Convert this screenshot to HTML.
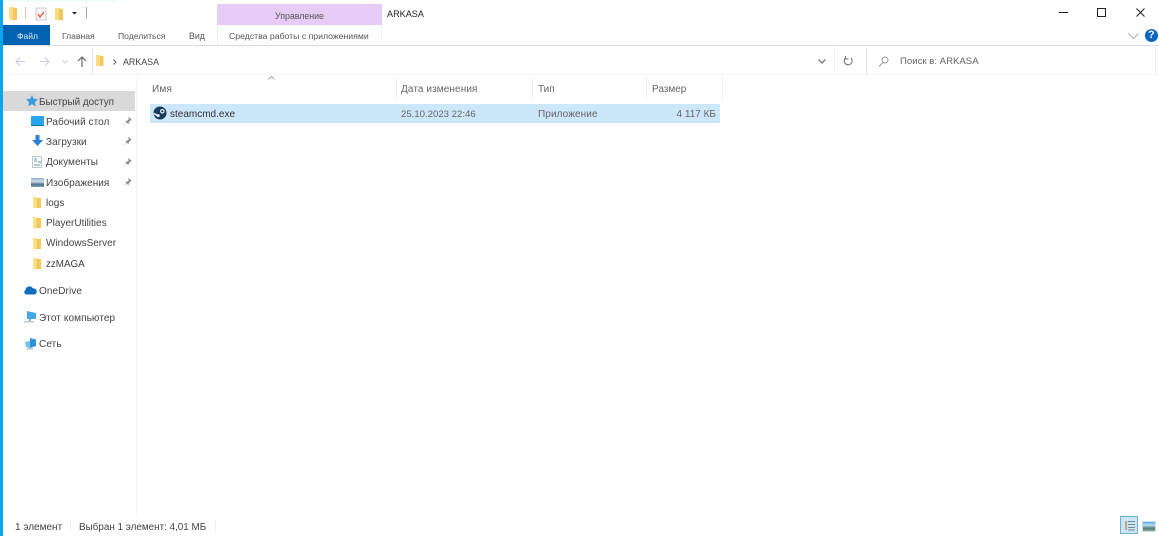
<!DOCTYPE html>
<html><head><meta charset="utf-8"><style>
html,body{margin:0;padding:0;background:#fff;width:1159px;height:536px;overflow:hidden}
body{position:relative;font-family:"Liberation Sans","DejaVu Sans",sans-serif;font-size:10px;color:#333}
#w{position:absolute;left:0;top:0;width:1159px;height:536px;filter:blur(.3px)}
.t{position:absolute;white-space:nowrap;line-height:12px;transform:translateY(1px)}
.b{position:absolute}
svg{position:absolute;overflow:visible}
</style></head><body><div id="w">
<div class="b" style="left:0;top:0;width:3px;height:536px;background:#0ea5ee"></div>
<div class="b" style="left:3px;top:0;width:114px;height:2px;background:#f2fbfc"></div>

<!-- quick access -->
<svg style="left:9px;top:7px" width="12" height="14"><path d="M0 0h4l1 1h3v12H2l-2-1z" fill="#fbdc82"/><path d="M4 1h4v12H4z" fill="#f4c95c"/></svg>
<div class="b" style="left:25px;top:7px;width:1px;height:12px;background:#c8c8c8"></div>
<svg style="left:35px;top:7px" width="12" height="14"><path d="M1 1h10v12H1z" fill="#f6f6f6" stroke="#ccc"/><path d="M3 7l2 3 4-5" fill="none" stroke="#e0573a" stroke-width="1.300"/></svg>
<svg style="left:54px;top:7px" width="11" height="13"><path d="M1 1h5l1 1h2v11H1z" fill="#fadc84"/><path d="M5 2h4v11H5z" fill="#f2c75c"/></svg>
<svg style="left:72px;top:11px" width="6" height="4"><path d="M0 1h5L2.500 3.500z" fill="#222"/></svg>
<div class="b" style="left:86px;top:7px;width:1px;height:12px;background:#aaa"></div>

<!-- contextual tab -->
<div class="b" style="left:217px;top:4px;width:165px;height:21px;background:#e8ccf8"></div>
<div class="b" style="left:217px;top:25px;width:1px;height:20px;background:#eee"></div>
<div class="b" style="left:381px;top:25px;width:1px;height:15px;background:#eee"></div>
<div class="t" style="left:275px;top:9px;color:#555;font-size:8.800px">Управление</div>
<div class="t" style="left:387px;top:7px;color:#222;font-size:9.100px">ARKASA</div>

<!-- tabs -->
<div class="b" style="left:3px;top:25px;width:47px;height:20px;background:#0063b1"></div>
<div class="t" style="left:17px;top:29px;color:#e6f0f8;font-size:8.500px">Файл</div>
<div class="t" style="left:62px;top:29px;color:#555;font-size:8.600px">Главная</div>
<div class="t" style="left:118px;top:29px;color:#555;font-size:8.600px">Поделиться</div>
<div class="t" style="left:189px;top:29px;color:#555;font-size:8.800px">Вид</div>
<div class="t" style="left:229px;top:29px;color:#555;font-size:8.700px">Средства работы с приложениями</div>
<div class="b" style="left:3px;top:45px;width:1156px;height:1px;background:#dcdcdc"></div>

<!-- window controls -->
<div class="b" style="left:1059px;top:12px;width:9px;height:1px;background:#111"></div>
<div class="b" style="left:1097px;top:8px;width:7px;height:7px;border:1px solid #222"></div>
<svg style="left:1136px;top:8px" width="10" height="10"><path d="M.5.500l8 8M8.500.500l-8 8" stroke="#222" fill="none"/></svg>
<svg style="left:1128px;top:33px" width="11" height="7"><path d="M.5.500l5 5 5-5" stroke="#aaa" fill="none"/></svg>
<div class="b" style="left:1145px;top:29px;width:13px;height:13px;border-radius:50%;background:#0a66c2"></div>
<div class="t" style="left:1148px;top:28px;color:#fff;font-size:11px;font-weight:bold">?</div>

<!-- nav bar -->
<svg style="left:15px;top:57px" width="11" height="9"><path d="M5 .5L1 4.500l4 4M1 4.500h9" stroke="#ccd" fill="none"/></svg>
<svg style="left:39px;top:57px" width="11" height="9"><path d="M6 .5l4 4-4 4M10 4.500H1" stroke="#ccd" fill="none"/></svg>
<svg style="left:62px;top:60px" width="6" height="4"><path d="M.5.500L3 3 5.500.5" stroke="#ccc" fill="none"/></svg>
<svg style="left:77px;top:56px" width="10" height="11"><path d="M5 11V1M1 5l4-4 4 4" stroke="#666" stroke-width="1.200" fill="none"/></svg>
<div class="b" style="left:92px;top:48px;width:1px;height:26px;background:#e6e6e6"></div>
<svg style="left:96px;top:55px" width="9" height="12"><path d="M0 0h4l1 1h2v10H0z" fill="#fbdc82"/><path d="M4 1h3.500v10H4z" fill="#f3c95c"/></svg>
<svg style="left:113px;top:59px" width="4" height="6"><path d="M.5.500L3 3 .5 5.500" stroke="#666" fill="none"/></svg>
<div class="t" style="left:123px;top:55px;color:#444;font-size:8.900px">ARKASA</div>
<svg style="left:818px;top:59px" width="8" height="5"><path d="M.5.500L4 4 7.500.5" stroke="#777" stroke-width="1.300" fill="none"/></svg>
<div class="b" style="left:834px;top:47px;width:1px;height:26px;background:#f0f0f0"></div>
<svg style="left:844px;top:56px" width="9" height="10"><path d="M2 1.500A4 4 0 1 0 7 2M1.500 0v3h3" stroke="#777" stroke-width="1.100" fill="none"/></svg>
<div class="b" style="left:866px;top:48px;width:1px;height:26px;background:#e2e2e2"></div>
<div class="b" style="left:1155px;top:48px;width:1px;height:26px;background:#eee"></div>
<svg style="left:878px;top:56px" width="11" height="11"><circle cx="7" cy="4" r="3" stroke="#999" fill="none"/><path d="M5 6.500L1 10.500" stroke="#999" fill="none"/></svg>
<div class="t" style="left:900px;top:55px;color:#666;font-size:9.600px">Поиск в: ARKASA</div>
<div class="b" style="left:3px;top:74px;width:1156px;height:1px;background:#f4f4f4"></div>

<!-- sidebar -->
<div class="b" style="left:136px;top:75px;width:1px;height:440px;background:#f6f6f6"></div>
<div class="b" style="left:3px;top:91px;width:132px;height:20px;background:#d9d9d9"></div>
<svg style="left:26px;top:95px" width="12" height="12"><path d="M6 0l1.800 3.800 4.200.5-3.100 2.900.8 4.100L6 9.300 2.300 11.300l.8-4.100L0 4.300l4.200-.5z" fill="#3d9be0"/></svg>
<div class="t" style="left:39px;top:96px;font-size:9.900px;color:#444">Быстрый доступ</div>

<div class="b" style="left:31px;top:116px;width:13px;height:9px;background:#28a4ec;border-bottom:1px solid #1276b5"></div>
<div class="t" style="left:46px;top:116px;color:#444;letter-spacing:.05px">Рабочий стол</div>
<svg style="left:32px;top:135px" width="11" height="12"><path d="M3.500 0h4v5H11L5.500 11 0 5h3.500z" fill="#2f7fd6"/></svg>
<div class="t" style="left:46px;top:136px;color:#444;letter-spacing:.05px">Загрузки</div>
<svg style="left:32px;top:156px" width="10" height="12"><path d="M.5.500h8l1 1v10H.5z" fill="#f8f8f8" stroke="#bcc"/><path d="M2 3h3M2 5h3M2 9h6" stroke="#7b9dba"/><path d="M6 6h3" stroke="#49a"/></svg>
<div class="t" style="left:46px;top:156px;color:#444;letter-spacing:.05px">Документы</div>
<div class="b" style="left:31px;top:178px;width:13px;height:9px;background:linear-gradient(#8ab4d6 0,#cfe0ea 40%,#4d7590 70%,#7fa0a8 100%)"></div>
<div class="t" style="left:46px;top:177px;color:#444;letter-spacing:.05px">Изображения</div>

<svg style="left:124px;top:117px" width="8" height="8"><path d="M4.500 0l3 3-1.500.5-1.500 2-.2 1.500L1.500 4.200 3 4l2-1.500zM2.500 5L0 8" fill="#8a8a8a" stroke="#8a8a8a" stroke-width=".4"/></svg>
<svg style="left:124px;top:137px" width="8" height="8"><path d="M4.500 0l3 3-1.500.5-1.500 2-.2 1.500L1.500 4.200 3 4l2-1.500zM2.500 5L0 8" fill="#8a8a8a" stroke="#8a8a8a" stroke-width=".4"/></svg>
<svg style="left:124px;top:158px" width="8" height="8"><path d="M4.500 0l3 3-1.500.5-1.500 2-.2 1.500L1.500 4.200 3 4l2-1.500zM2.500 5L0 8" fill="#8a8a8a" stroke="#8a8a8a" stroke-width=".4"/></svg>
<svg style="left:124px;top:178px" width="8" height="8"><path d="M4.500 0l3 3-1.500.5-1.500 2-.2 1.500L1.500 4.200 3 4l2-1.500zM2.500 5L0 8" fill="#8a8a8a" stroke="#8a8a8a" stroke-width=".4"/></svg>

<svg style="left:33px;top:197px" width="8" height="11"><path d="M0 0h3.500l1 1H7v10H0z" fill="#fbe08a"/><path d="M3.500 1H8v10H3.500z" fill="#f3c95c"/></svg>
<div class="t" style="left:46px;top:197px;color:#444">logs</div>
<svg style="left:33px;top:217px" width="8" height="11"><path d="M0 0h3.500l1 1H7v10H0z" fill="#fbe08a"/><path d="M3.500 1H8v10H3.500z" fill="#f3c95c"/></svg>
<div class="t" style="left:46px;top:217px;color:#444">PlayerUtilities</div>
<svg style="left:33px;top:238px" width="8" height="11"><path d="M0 0h3.500l1 1H7v10H0z" fill="#fbe08a"/><path d="M3.500 1H8v10H3.500z" fill="#f3c95c"/></svg>
<div class="t" style="left:46px;top:237px;color:#444">WindowsServer</div>
<svg style="left:33px;top:258px" width="8" height="11"><path d="M0 0h3.500l1 1H7v10H0z" fill="#fbe08a"/><path d="M3.500 1H8v10H3.500z" fill="#f3c95c"/></svg>
<div class="t" style="left:46px;top:258px;color:#444;font-size:9.800px">zzMAGA</div>

<svg style="left:23px;top:285px" width="14" height="10"><path d="M3 9.500A2.500 2.500 0 0 1 2.500 5 4 4 0 0 1 10 3.500 3 3 0 0 1 13.500 7.500 2.500 2.500 0 0 1 11 9.500z" fill="#0f6cbd"/></svg>
<div class="t" style="left:39px;top:285px;color:#444;letter-spacing:.1px">OneDrive</div>
<svg style="left:24px;top:311px" width="13" height="13"><path d="M3 0l9 2v6L3 8z" fill="#45a7ea"/><path d="M0 10h10v1.500H0z" fill="#c4cbd2"/><path d="M5 8h2v2H5z" fill="#8aa"/></svg>
<div class="t" style="left:39px;top:312px;color:#444;letter-spacing:.1px">Этот компьютер</div>
<svg style="left:25px;top:338px" width="12" height="12"><path d="M5 0l6 1.500V8L5 10z" fill="#2e93dc"/><path d="M0 4l5-1v7L1 9z" fill="#7cc0ee"/><path d="M2 10h6v1.500H2z" fill="#b8c4cc"/></svg>
<div class="t" style="left:39px;top:338px;color:#444;letter-spacing:.1px">Сеть</div>

<!-- columns -->
<svg style="left:268px;top:76px" width="7" height="4"><path d="M.5 3.500L3.500.5l3 3" stroke="#aaa" fill="none"/></svg>
<div class="t" style="left:152px;top:83px;color:#666;font-size:10px;letter-spacing:.2px">Имя</div>
<div class="t" style="left:401px;top:83px;color:#666;font-size:10px;letter-spacing:.1px">Дата изменения</div>
<div class="t" style="left:538px;top:83px;color:#666;font-size:10px">Тип</div>
<div class="t" style="left:652px;top:83px;color:#666;font-size:10px">Размер</div>
<div class="b" style="left:396px;top:77px;width:1px;height:22px;background:#f0f0f0"></div>
<div class="b" style="left:532px;top:77px;width:1px;height:22px;background:#f0f0f0"></div>
<div class="b" style="left:646px;top:77px;width:1px;height:22px;background:#f0f0f0"></div>
<div class="b" style="left:722px;top:77px;width:1px;height:22px;background:#f0f0f0"></div>

<!-- row -->
<div class="b" style="left:150px;top:104px;width:570px;height:19px;background:#cce6fa"></div>
<svg style="left:153px;top:106px" width="14" height="14"><circle cx="7" cy="7" r="6.500" fill="#143a5c"/><circle cx="9.300" cy="5.300" r="2.300" fill="#e8f0f6"/><circle cx="9.300" cy="5.300" r="1.100" fill="#143a5c"/><path d="M.8 7.500L5.500 10" stroke="#e8f0f6" stroke-width="1.600"/><circle cx="5.200" cy="9.600" r="1.500" fill="#e8f0f6"/></svg>
<div class="t" style="left:170px;top:108px;color:#333;font-size:10px">steamcmd.exe</div>
<div class="t" style="left:401px;top:108px;color:#666;font-size:9.600px">25.10.2023 22:46</div>
<div class="t" style="left:538px;top:108px;color:#666;font-size:10px;letter-spacing:.1px">Приложение</div>
<div class="t" style="right:443px;top:108px;color:#666;font-size:10px">4 117 КБ</div>

<!-- status -->
<div class="t" style="left:15px;top:521px;color:#444;font-size:10px">1 элемент</div>
<div class="b" style="left:70px;top:521px;width:1px;height:10px;background:#eee"></div>
<div class="t" style="left:79px;top:521px;color:#444;font-size:9.900px">Выбран 1 элемент: 4,01 МБ</div>
<div class="b" style="left:215px;top:521px;width:1px;height:10px;background:#eee"></div>
<div class="b" style="left:1120px;top:516px;width:18px;height:18px;background:#c8e6f5;box-shadow:inset 0 0 0 1px #6fb1cf"></div>
<svg style="left:1124px;top:520px" width="12" height="11"><path d="M1 1h2v9H1z" fill="#b9a98f"/><path d="M4 1.500h7M4 4.500h7M4 7.500h7M4 10h7" stroke="#7a8a90"/></svg>
<div class="b" style="left:1142px;top:521px;width:12px;height:9px;background:linear-gradient(#5aa8e8 0,#bcdcf0 35%,#4f7f70 70%,#8fa8b0 100%);border:1px solid #cfe0e8"></div>
</div></body></html>
